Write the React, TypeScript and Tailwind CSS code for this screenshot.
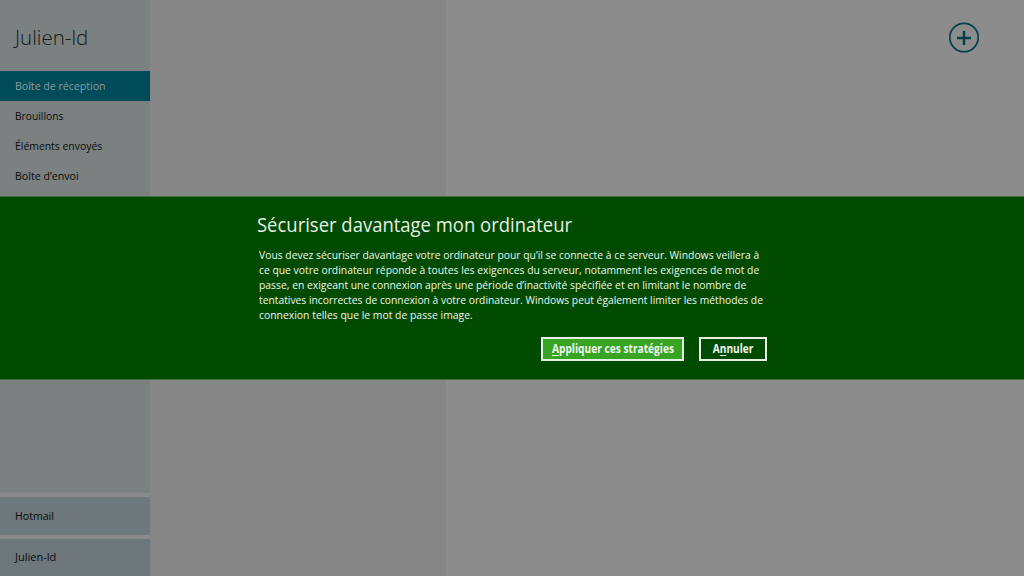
import React from 'react';

const folders = [
  { name: 'Brouillons', scale: 'scale-x-[0.89]' },
  { name: 'Éléments envoyés', scale: 'scale-x-[0.905]' },
  { name: 'Boîte d’envoi', scale: 'scale-x-[0.925]' },
];

const lines = [
  { text: 'Vous devez sécuriser davantage votre ordinateur pour qu’il se connecte à ce serveur. Windows veillera à', scale: 'scale-x-[0.908]' },
  { text: 'ce que votre ordinateur réponde à toutes les exigences du serveur, notamment les exigences de mot de', scale: 'scale-x-[0.908]' },
  { text: 'passe, en exigeant une connexion après une période d’inactivité spécifiée et en limitant le nombre de', scale: 'scale-x-[0.909]' },
  { text: 'tentatives incorrectes de connexion à votre ordinateur. Windows peut également limiter les méthodes de', scale: 'scale-x-[0.904]' },
  { text: 'connexion telles que le mot de passe image.', scale: 'scale-x-[0.912]' },
];

function Sidebar() {
  return (
    <aside className="flex w-[150px] shrink-0 flex-col bg-[#7b8181] text-[11.5px] whitespace-nowrap text-[#080b0c]">
      <h1 className="h-[71px] pl-[15px] pt-[23px] text-[20.5px] leading-[28px] font-light text-[#141818]">
        Julien-ld
      </h1>
      <nav>
        <div className="flex h-[30px] items-center bg-[#004b5a] pl-[15px] text-[#8f9b9d]">
          <span className="origin-left scale-x-[0.92]">Boîte de réception</span>
        </div>
        {folders.map(({ name, scale }) => (
          <div key={name} className="flex h-[30px] items-center pl-[15px]">
            <span className={`origin-left ${scale}`}>{name}</span>
          </div>
        ))}
      </nav>
      <div className="mt-auto">
        <div className="flex h-[42px] items-center border-t-4 border-[#8a8a8a] bg-[#6e777b] pb-px pl-[15px]">
          <span className="origin-left scale-x-[0.92]">Hotmail</span>
        </div>
        <div className="flex h-[41px] items-center border-t-4 border-[#8a8a8a] bg-[#6e777b] pb-px pl-[15px]">
          <span className="origin-left scale-x-[0.96]">Julien-ld</span>
        </div>
      </div>
    </aside>
  );
}

export default function App() {
  return (
    <div className="relative flex h-[576px] w-[1024px] overflow-hidden bg-[#8c8c8c] font-['Open_Sans','Noto_Sans',sans-serif]">
      <Sidebar />
      <section className="w-[296px] shrink-0 bg-[#868686]" />
      <main className="flex flex-1 justify-end pr-[44px] pt-[22px]">
        <svg width="32" height="32" viewBox="0 0 32 32" fill="none" stroke="#00414c" aria-label="Nouveau">
          <circle cx="16" cy="15.5" r="14.2" strokeWidth="1.7" />
          <path d="M9 16h14M16 9v14" strokeWidth="2.5" />
        </svg>
      </main>

      <div
        role="dialog"
        className="absolute inset-x-0 top-[196px] flex h-[184px] flex-col border-y border-[#387338] bg-[#004b00] pl-[256px] text-[#f0f5f0]"
      >
        <h2 className="mt-[13px] ml-[0.5px] h-[31px] w-max origin-left scale-x-[0.923] text-[20px] leading-[30px] font-normal whitespace-nowrap text-[#e6eee6]">
          Sécuriser davantage mon ordinateur
        </h2>
        <div className="mt-[6px] pl-[3px] text-[11.4px] leading-[15px]">
          {lines.map(({ text, scale }) => (
            <div key={text} className={`w-max origin-left whitespace-nowrap ${scale}`}>{text}</div>
          ))}
        </div>
        <div className="mt-[15px] flex w-[511px] justify-end gap-[15px] text-[11.5px] font-bold">
          <button className="flex h-[24px] w-[143px] items-center justify-center border-2 border-[#e6f0e6] bg-[#38a522] whitespace-pre">
            <span className="scale-x-[0.885]"><span className="underline underline-offset-2">A</span>ppliquer ces stratégies</span>
          </button>
          <button className="flex h-[24px] w-[68px] items-center justify-center border-2 border-[#e6f0e6] whitespace-pre">
            <span className="scale-x-[0.88]">A<span className="underline underline-offset-2">n</span>nuler</span>
          </button>
        </div>
      </div>
    </div>
  );
}
